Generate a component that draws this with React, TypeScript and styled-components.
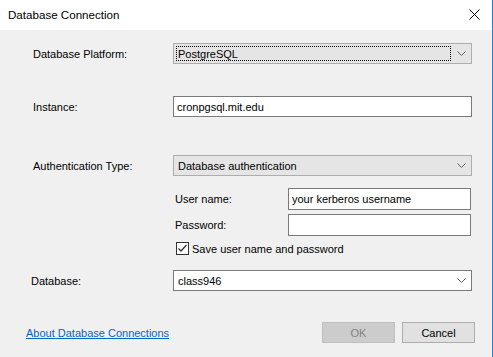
import styled, { createGlobalStyle } from 'styled-components'

const GlobalStyle = createGlobalStyle`
  html, body {
    margin: 0;
    padding: 0;
    background: #f0f0f0;
  }
  body {
    font-family: 'Liberation Sans', Arial, sans-serif;
    font-size: 11px;
    color: #000;
  }
`

//styled-components
const Window = styled.div`
  width: 493px;
  height: 357px;
  box-sizing: border-box;
  border-right: 1px solid #1883d7;
  display: flex;
  flex-flow: column;
  background-color: #f0f0f0;
`

const TitleBar = styled.div`
  height: 30px;
  flex: none;
  background-color: #ffffff;
  display: flex;
  align-items: center;
  justify-content: space-between;
  padding: 0 8px 1px 8px;
  box-sizing: border-box;
  font-size: 11.6px;
`

const CloseButton = styled.div`
  width: 20px;
  height: 20px;
  display: flex;
  align-items: center;
  justify-content: center;
`

const Body = styled.div`
  flex: 1;
  display: flex;
  flex-flow: column;
  padding: 13px 20px 0 33px;
`

const Row = styled.div<{ $top: number }>`
  display: grid;
  grid-template-columns: 140px 299px;
  align-items: center;
  margin-top: ${(p) => p.$top}px;
`

const SubRow = styled.div<{ $top: number }>`
  display: grid;
  grid-template-columns: 113px 183px;
  align-items: center;
  margin-left: 142px;
  margin-top: ${(p) => p.$top}px;
`

const Label = styled.span<{ $shift?: number }>`
  white-space: nowrap;
  margin-left: ${(p) => p.$shift ?? 0}px;
`

const TextBox = styled.div<{ $h?: number }>`
  height: ${(p) => p.$h ?? 21}px;
  box-sizing: border-box;
  border: 1px solid #7a7a7a;
  background-color: #ffffff;
  display: flex;
  align-items: center;
  padding-left: 3px;
`

const Combo = styled.div<{ $flat?: boolean }>`
  height: 21px;
  box-sizing: border-box;
  border: 1px solid ${(p) => (p.$flat ? '#7a7a7a' : '#adadad')};
  background-color: ${(p) => (p.$flat ? '#ffffff' : '#e5e5e5')};
  display: flex;
  align-items: center;
  padding: 0 5px 0 2px;
`

const ComboText = styled.div<{ $focus?: boolean }>`
  flex: 1;
  height: 15px;
  display: flex;
  align-items: center;
  padding-left: 1px;
  box-sizing: border-box;
  border: 1px dotted ${(p) => (p.$focus ? '#000' : 'transparent')};
  margin-right: 6px;
`

const CheckRow = styled.label`
  display: flex;
  align-items: center;
  gap: 3px;
  margin-left: 143px;
  margin-top: 6px;
`

const CheckBox = styled.span`
  width: 13px;
  height: 13px;
  box-sizing: border-box;
  border: 1px solid #333333;
  background-color: #ffffff;
  display: flex;
  align-items: center;
  justify-content: center;
`

const Footer = styled.div`
  display: flex;
  align-items: center;
  justify-content: space-between;
  margin-top: 31px;
  margin-left: -7px;
  margin-right: -3px;
`

const Link = styled.a`
  color: #0066cc;
  text-decoration: underline;
  cursor: pointer;
`

const Buttons = styled.div`
  display: flex;
  gap: 7px;
`

const Button = styled.button<{ $disabled?: boolean }>`
  width: 73px;
  height: 21px;
  box-sizing: border-box;
  font-family: inherit;
  font-size: 11px;
  padding: 0;
  border: 1px solid ${(p) => (p.$disabled ? '#bfbfbf' : '#adadad')};
  background-color: ${(p) => (p.$disabled ? '#cccccc' : '#e1e1e1')};
  color: ${(p) => (p.$disabled ? '#838383' : '#000000')};
`

const Chevron = () => (
  <svg width="9" height="5" viewBox="0 0 9 5">
    <polyline points="0.5,0.5 4.5,4.5 8.5,0.5" fill="none" stroke="#606060" strokeWidth="1" />
  </svg>
)

export default function App() {
  return (
    <>
      <GlobalStyle />
      <Window>
        <TitleBar>
          <span>Database Connection</span>
          <CloseButton>
            <svg width="11" height="11" viewBox="0 0 11 11">
              <path d="M0.5 0.5 L10.5 10.5 M10.5 0.5 L0.5 10.5" stroke="#000" strokeWidth="1" />
            </svg>
          </CloseButton>
        </TitleBar>
        <Body>
          <Row $top={0}>
            <Label>Database Platform:</Label>
            <Combo>
              <ComboText $focus>PostgreSQL</ComboText>
              <Chevron />
            </Combo>
          </Row>
          <Row $top={32}>
            <Label>Instance:</Label>
            <TextBox>cronpgsql.mit.edu</TextBox>
          </Row>
          <Row $top={38}>
            <Label>Authentication Type:</Label>
            <Combo>
              <ComboText>Database authentication</ComboText>
              <Chevron />
            </Combo>
          </Row>
          <SubRow $top={12}>
            <Label>User name:</Label>
            <TextBox $h={22}>your kerberos username</TextBox>
          </SubRow>
          <SubRow $top={4}>
            <Label>Password:</Label>
            <TextBox $h={22} />
          </SubRow>
          <CheckRow>
            <CheckBox>
              <svg width="11" height="11" viewBox="0 0 11 11">
                <polyline points="1.5,5.5 4,8 9.5,2" fill="none" stroke="#333" strokeWidth="1.3" />
              </svg>
            </CheckBox>
            <span>Save user name and password</span>
          </CheckRow>
          <Row $top={15}>
            <Label $shift={-2}>Database:</Label>
            <Combo $flat>
              <ComboText>class946</ComboText>
              <Chevron />
            </Combo>
          </Row>
          <Footer>
            <Link>About Database Connections</Link>
            <Buttons>
              <Button $disabled>OK</Button>
              <Button>Cancel</Button>
            </Buttons>
          </Footer>
        </Body>
      </Window>
    </>
  )
}
